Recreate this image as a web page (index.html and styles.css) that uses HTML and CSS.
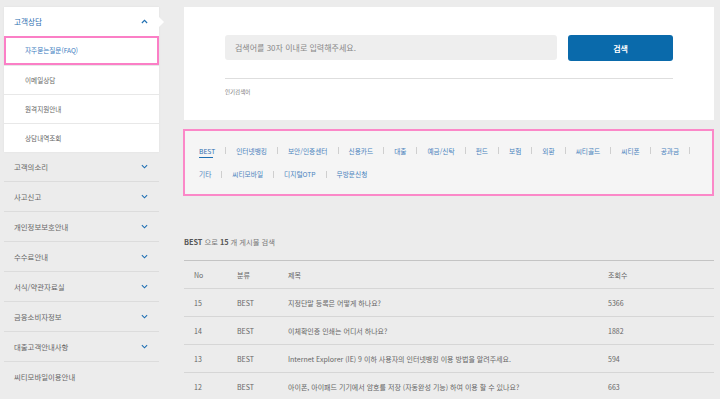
FILE: index.html
```html
<!DOCTYPE html>
<html lang="ko">
<head>
    <meta charset="UTF-8">
    <meta name="viewport" content="width=device-width, initial-scale=1.0">
    <title>고객상담 - 자주묻는질문</title>
    <link rel="stylesheet" href="styles.css">
</head>
<body>

<div class="wrap">
    <!-- 좌측 메뉴 -->
    <aside class="side">
        <div class="side-open">
            <div class="side-head">
                <span>고객상담</span>
                <svg class="chev" viewBox="0 0 8 5"><polyline points="1,4.2 4,1.2 7,4.2"/></svg>
            </div>
            <ul class="sub-menu">
                <li class="on">자주묻는질문(FAQ)</li>
                <li>이메일상담</li>
                <li>원격지원안내</li>
                <li>상담내역조회</li>
            </ul>
        </div>
        <ul class="side-menu">
            <li>고객의소리 <svg class="chev" viewBox="0 0 8 5"><polyline points="1,1 4,4 7,1"/></svg></li>
            <li>사고신고 <svg class="chev" viewBox="0 0 8 5"><polyline points="1,1 4,4 7,1"/></svg></li>
            <li>개인정보보호안내 <svg class="chev" viewBox="0 0 8 5"><polyline points="1,1 4,4 7,1"/></svg></li>
            <li>수수료안내 <svg class="chev" viewBox="0 0 8 5"><polyline points="1,1 4,4 7,1"/></svg></li>
            <li>서식/약관자료실 <svg class="chev" viewBox="0 0 8 5"><polyline points="1,1 4,4 7,1"/></svg></li>
            <li>금융소비자정보 <svg class="chev" viewBox="0 0 8 5"><polyline points="1,1 4,4 7,1"/></svg></li>
            <li>대출고객안내사항 <svg class="chev" viewBox="0 0 8 5"><polyline points="1,1 4,4 7,1"/></svg></li>
            <li>씨티모바일이용안내</li>
        </ul>
    </aside>

    <main class="main">
        <!-- 검색 -->
        <div class="search-box">
            <div class="search-row">
                <input type="text" class="search-input" placeholder="검색어를 30자 이내로 입력해주세요.">
                <button class="search-btn">검색</button>
            </div>
            <div class="popular">인기검색어</div>
        </div>

        <!-- 분류 탭 -->
        <ul class="cate">
            <li class="on">BEST</li>
            <li>인터넷뱅킹</li>
            <li>보안/인증센터</li>
            <li>신용카드</li>
            <li>대출</li>
            <li>예금/신탁</li>
            <li>펀드</li>
            <li>보험</li>
            <li>외환</li>
            <li>씨티골드</li>
            <li>씨티폰</li>
            <li>공과금</li>
            <li>기타</li>
            <li>씨티모바일</li>
            <li>디지털OTP</li>
            <li class="last">무방문신청</li>
        </ul>

        <p class="result"><b>BEST</b> 으로 <b>15</b> 개 게시물 검색</p>

        <table class="list">
            <thead>
                <tr><th class="c-no">No</th><th class="c-cate">분류</th><th>제목</th><th class="c-hit">조회수</th></tr>
            </thead>
            <tbody>
                <tr><td>15</td><td>BEST</td><td>지정단말 등록은 어떻게 하나요?</td><td>5366</td></tr>
                <tr><td>14</td><td>BEST</td><td>이체확인증 인쇄는 어디서 하나요?</td><td>1882</td></tr>
                <tr><td>13</td><td>BEST</td><td>Internet Explorer (IE) 9 이하 사용자의 인터넷뱅킹 이용 방법을 알려주세요.</td><td>594</td></tr>
                <tr><td>12</td><td>BEST</td><td>아이폰, 아이패드 기기에서 암호를 저장 (자동완성 기능) 하여 이용 할 수 있나요?</td><td>663</td></tr>
            </tbody>
        </table>
    </main>
</div>

</body>
</html>
```

FILE: styles.css
```css
body {
    margin: 0;
    padding: 0;
    background-color: #ececec;
    font-family: "Noto Sans CJK KR", "Noto Sans", sans-serif;
    color: #666;
}

ul {
    list-style: none;
    margin: 0;
    padding: 0;
}

.wrap {
    display: flex;
    align-items: flex-start;
    gap: 25px;
    padding: 7px 6px 0 4px;
}

/* 좌측 메뉴 */
.side {
    width: 155px;
    flex-shrink: 0;
}

.side-open {
    position: relative;
    background-color: #fff;
    box-shadow: 0 0 2px rgba(0, 0, 0, 0.06);
}

.side-open::after {
    content: "";
    position: absolute;
    right: -5px;
    top: 10px;
    border-left: 5px solid #fff;
    border-top: 5px solid transparent;
    border-bottom: 5px solid transparent;
}

.chev {
    width: 7px;
    height: 5px;
    fill: none;
    stroke: #1f6fb2;
    stroke-width: 1.3;
}

.side-head {
    display: flex;
    justify-content: space-between;
    align-items: center;
    height: 29px;
    padding: 0 11px 0 10px;
    font-size: 7.6px;
    color: #2a6eb0;
}

.sub-menu li {
    height: 28px;
    line-height: 28px;
    padding-left: 21px;
    font-size: 6.6px;
    color: #666;
    border-top: 1px solid #e8e8e8;
}

.sub-menu li.on {
    color: #3a7cc0;
    border: 2px solid #fb7fc6;
    height: 25px;
    line-height: 25px;
    padding-left: 19px;
}

.side-menu li {
    display: flex;
    justify-content: space-between;
    align-items: center;
    height: 29px;
    padding: 0 11px 0 10px;
    font-size: 7.4px;
    color: #666;
    border-bottom: 1px solid #dcdcdc;
}

.side-menu li:last-child {
    border-bottom: 0;
}

/* 본문 */
.main {
    width: 530px;
}

.search-box {
    background-color: #fff;
    padding: 28px 41px 0;
    height: 85px;
}

.search-row {
    display: flex;
    gap: 11px;
    padding-bottom: 17px;
    border-bottom: 1px solid #dedede;
}

.search-input {
    flex: 1;
    height: 25px;
    border: 0;
    border-radius: 3px;
    background-color: #eeeeee;
    padding: 0 10px;
    font-family: inherit;
    font-size: 8px;
    color: #555;
}

.search-input::placeholder {
    color: #888;
}

.search-btn {
    width: 105px;
    height: 26px;
    border: 0;
    border-radius: 3px;
    background-color: #0a6aab;
    color: #fff;
    font-family: inherit;
    font-size: 8px;
    font-weight: bold;
}

.popular {
    margin-top: 9px;
    font-size: 5.5px;
    color: #777;
}

.cate {
    display: flex;
    flex-wrap: wrap;
    margin-top: 9px;
    margin-left: -1px;
    padding: 12px 10px 12px 14px;
    background-color: #f5f5f5;
    border: 2px solid #fb88c8;
    row-gap: 8px;
    height: 67px;
    box-sizing: border-box;
}

.cate li {
    display: flex;
    align-items: center;
    height: 15px;
    font-size: 6.7px;
    color: #4a83bd;
}

.cate li::after {
    content: "";
    width: 1px;
    height: 7px;
    background-color: #cfcfcf;
    margin: 0 10px 0 10px;
}

.cate li.last::after {
    display: none;
}

.cate li.on {
    position: relative;
    color: #2d6db0;
}

.cate li.on::before {
    content: "";
    position: absolute;
    left: 0;
    bottom: 0;
    width: 14px;
    height: 1px;
    background-color: #1f6fb2;
}

.result {
    margin: 41px 0 13px;
    font-size: 7.3px;
    color: #777;
}

.result b {
    color: #555;
}

.list {
    width: 100%;
    border-collapse: collapse;
    border-top: 1px solid #c4c4c4;
    font-size: 7px;
    color: #666;
}

.list th,
.list td {
    text-align: left;
    font-weight: normal;
    padding: 0 0 0 10px;
    height: 27px;
    border-bottom: 1px solid #d6d6d6;
}

.list .c-no {
    width: 33px;
}

.list .c-cate {
    width: 41px;
}

.list .c-hit {
    width: 106px;
}
```
